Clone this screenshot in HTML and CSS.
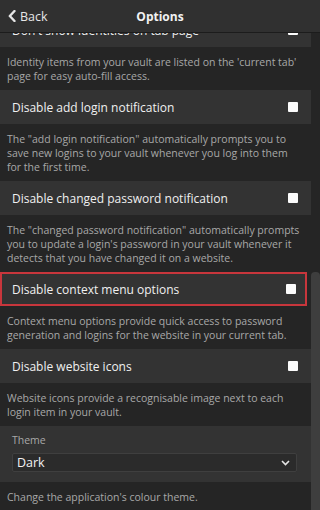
FILE: index.html
```html
<!DOCTYPE html>
<html>
<head>
<meta charset="utf-8">
<link rel="stylesheet" href="styles.css">
</head>
<body>
<header class="topbar">
  <a class="back">
    <svg class="chev" width="8" height="12" viewBox="0 0 8 12"><path d="M6.5 1 L1.8 6 L6.5 11" fill="none" stroke="#e6e6e6" stroke-width="2.4" stroke-linejoin="round" stroke-linecap="round"/></svg>
    <span>Back</span>
  </a>
  <h1 class="title">Options</h1>
  <span class="spacer"></span>
</header>
<div class="body">
  <div class="viewport">
    <div class="list">
      <div class="row"><span class="label">Don't show identities on tab page</span><span class="box"></span></div>
      <p class="desc">Identity items from your vault are listed on the 'current tab' page for easy auto-fill access.</p>
      <div class="row"><span class="label">Disable add login notification</span><span class="box"></span></div>
      <p class="desc">The "add login notification" automatically prompts you to save new logins to your vault whenever you log into them for the first time.</p>
      <div class="row"><span class="label">Disable changed password notification</span><span class="box"></span></div>
      <p class="desc">The "changed password notification" automatically prompts you to update a login's password in your vault whenever it detects that you have changed it on a website.</p>
      <div class="row row-hl"><span class="label">Disable context menu options</span><span class="box"></span></div>
      <p class="desc">Context menu options provide quick access to password generation and logins for the website in your current tab.</p>
      <div class="row"><span class="label">Disable website icons</span><span class="box"></span></div>
      <p class="desc">Website icons provide a recognisable image next to each login item in your vault.</p>
      <div class="theme">
        <div class="theme-label">Theme</div>
        <div class="select"><span>Dark</span>
          <svg width="9" height="6" viewBox="0 0 9 6"><path d="M1 1 L4.5 4.5 L8 1" fill="none" stroke="#e6e6e6" stroke-width="1.6"/></svg>
        </div>
      </div>
      <p class="desc">Change the application's colour theme.</p>
    </div>
  </div>
  <div class="scrollbar"><div class="thumb"></div></div>
</div>
</body>
</html>
```
FILE: styles.css
```css
* { box-sizing: border-box; }
html, body { margin: 0; padding: 0; }
body {
  width: 320px;
  height: 510px;
  overflow: hidden;
  background: #252525;
  font-family: "Open Sans", "Noto Sans", sans-serif;
  color: #e8e8e8;
  display: flex;
  flex-direction: column;
}
.topbar {
  height: 33px;
  flex: none;
  background: #303030;
  border-bottom: 1px solid #1c1c1c;
  display: grid;
  grid-template-columns: 1fr auto 1fr;
  align-items: center;
  position: relative;
  z-index: 1;
}
.back {
  display: flex;
  align-items: center;
  gap: 4px;
  padding-left: 8px;
  font-size: 12.5px;
  color: #e6e6e6;
}
.title {
  margin: 0;
  text-align: center;
  font-size: 12px;
  font-weight: 700;
  color: #f2f2f2;
}
.body {
  flex: 1;
  display: flex;
  min-height: 0;
}
.viewport {
  flex: 1;
  overflow: hidden;
}
.list {
  margin-top: -20px;
}
.row {
  height: 34px;
  background: #333333;
  display: flex;
  align-items: center;
  justify-content: space-between;
  padding: 0 13px 0 12px;
  font-size: 12px;
  color: #f0f0f0;
}
.row-hl {
  border: 2px solid #c8363c;
  margin-right: 4px;
  padding: 0 9px 0 10px;
}
.box {
  width: 10px;
  height: 10px;
  background: #fbfbfb;
  border-radius: 1px;
}
.desc {
  margin: 0;
  padding: 8px 7px 7px 7px;
  font-size: 10.5px;
  line-height: 14px;
  color: #a8a8a8;
  background: #252525;
}
.theme {
  background: #333333;
  padding: 7px 12px 10px 12px;
}
.theme-label {
  font-size: 10.5px;
  color: #a8a8a8;
  line-height: 14px;
  margin-bottom: 6px;
}
.select {
  height: 19px;
  width: 285px;
  background: #2b2b2b;
  border: 1px solid #3f3f3f;
  border-radius: 2px;
  display: flex;
  align-items: center;
  justify-content: space-between;
  padding: 0 6px 0 4px;
  font-size: 12.5px;
  color: #f2f2f2;
}
.scrollbar {
  width: 9px;
  flex: none;
  background: #252525;
  display: flex;
  flex-direction: column;
  justify-content: flex-end;
}
.thumb {
  height: 238px;
  background: #3e3e3e;
  border-radius: 4px 4px 0 0;
}
```
